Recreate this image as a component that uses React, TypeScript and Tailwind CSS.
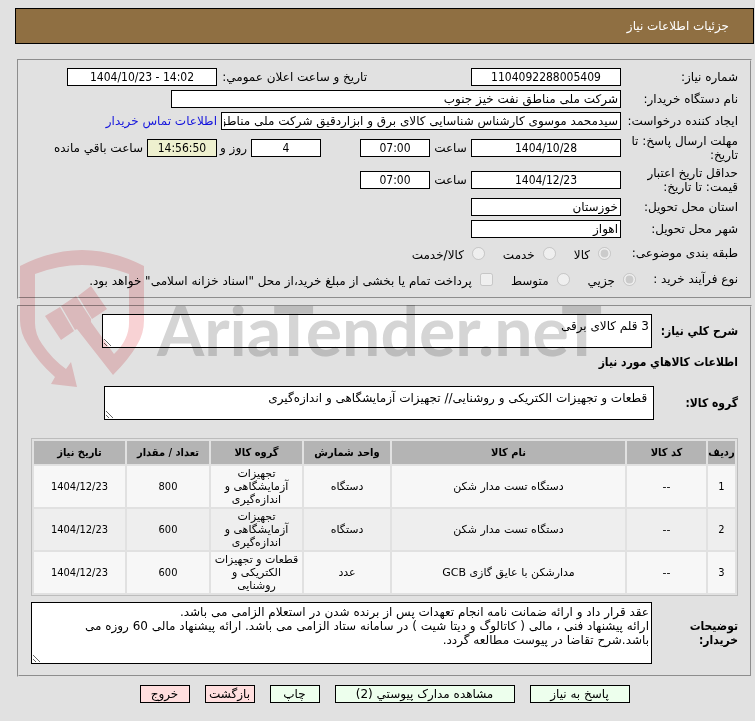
import React from "react";

const field =
  "h-[18px] border border-black px-0.5 text-[12px] leading-4 shrink-0 outline-none";
const numeric = "text-center font-['DejaVu_Sans_Condensed','DejaVu_Sans',sans-serif]";
const heading = "font-['DejaVu_Sans_Condensed','DejaVu_Sans',sans-serif] text-[12px] font-bold";
const area =
  "block border border-black bg-white px-0.5 text-[12px] leading-[14px] outline-none";

const items = [
  { name: "دستگاه تست مدار شکن", unit: "دستگاه", group: "تجهیزات آزمایشگاهی و اندازه‌گیری", count: "800", date: "1404/12/23" },
  { name: "دستگاه تست مدار شکن", unit: "دستگاه", group: "تجهیزات آزمایشگاهی و اندازه‌گیری", count: "600", date: "1404/12/23" },
  { name: "مدارشکن با عایق گازی GCB", unit: "عدد", group: "قطعات و تجهیزات الکتریکی و روشنایی", count: "600", date: "1404/12/23" },
];

const columns = [
  { title: "ردیف", width: "w-[27px]" },
  { title: "کد کالا", width: "w-[79px]" },
  { title: "نام کالا", width: "" },
  { title: "واحد شمارش", width: "w-[86px]" },
  { title: "گروه کالا", width: "w-[91px]" },
  { title: "تعداد / مقدار", width: "w-[82px]" },
  { title: "تاریخ نیاز", width: "w-[91px]" },
];

const actions = [
  { text: "پاسخ به نیاز", style: "w-[100px] bg-[#edffed]" },
  { text: "مشاهده مدارک پیوستي (2)", style: "w-[180px] bg-[#edffed]" },
  { text: "چاپ", style: "w-[50px] bg-[#edffed]" },
  { text: "بازگشت", style: "w-[50px] bg-[#ffdede]" },
  { text: "خروج", style: "w-[50px] bg-[#ffdede]" },
];

function FieldLabel({ id, children }: { id: string; children: React.ReactNode }) {
  return (
    <label htmlFor={id} className="w-[117px] shrink-0 leading-[14px]">
      {children}
    </label>
  );
}

function Choice({ type, name, label, checked }: { type: "radio" | "checkbox"; name: string; label: string; checked?: boolean }) {
  return (
    <label className="flex items-center gap-2 whitespace-nowrap">
      <input type={type} name={name} defaultChecked={checked} disabled className="m-0 h-[13px] w-[13px]" />
      <span className="pt-1">{label}</span>
    </label>
  );
}

function Watermark() {
  return (
    <div dir="ltr" className="pointer-events-none absolute left-5 top-[248px] flex items-end gap-3 mix-blend-multiply" aria-hidden="true">
      <svg width="125" height="140" viewBox="0 0 125 140" fill="#f8d2d4">
        <path d="M0 18 Q62 -14 124 18 V72 Q124 86 117 97 Q109 111 93 127 L57 81 L55 82 L41 58 L56 48 L71 71 L71 74 L94 106 Q109 92 109 75 V26 Q62 8 15 26 V75 Q15 86 22 96 Q32 111 46 121 L51 114 L57 139 L31 136 L35 129 Q18 114 8 97 Q0 85 0 72 Z" />
        <path d="M58 48 L71 38 L87 61 L72 71 Z" />
        <path d="M25 68 L40 59 L54 83 L41 92 Z" />
      </svg>
      <span className="whitespace-nowrap pb-5 font-['Lato','Liberation_Sans',sans-serif] text-[68px] font-bold leading-[76px] text-[#d5d5d5]">
        AriaTender.neT
      </span>
    </div>
  );
}

export default function App() {
  return (
    <div
      dir="rtl"
      className="relative min-h-screen bg-[#e1e1e1] pb-4 pl-[15px] pr-px pt-2 font-['DejaVu_Sans',sans-serif] text-[12px] leading-[14px] text-black"
    >
      <header className="flex h-9 items-center border border-black bg-[#8f6f42] px-6 text-white">
        <h1>جزئیات اطلاعات نیاز</h1>
      </header>

      <main className="mx-0.5 mt-[15px]">
        {/* Request details */}
        <fieldset className="flex flex-col gap-1 border-2 border-[#e1e1e1] px-3 pb-[7px] pt-[7px] [border-style:groove]">
          <div className="flex items-center">
            <FieldLabel id="number">شماره نیاز:</FieldLabel>
            <input id="number" readOnly defaultValue="1104092288005409" className={`${field} ${numeric} w-[150px] bg-white`} />
            <label htmlFor="announced" className="mr-[104px] w-[150px] shrink-0 whitespace-nowrap">
              تاریخ و ساعت اعلان عمومي:
            </label>
            <input id="announced" readOnly dir="ltr" defaultValue="1404/10/23 - 14:02" className={`${field} ${numeric} w-[150px] bg-white`} />
          </div>
          <div className="flex items-center">
            <FieldLabel id="buyer">نام دستگاه خریدار:</FieldLabel>
            <input id="buyer" readOnly defaultValue="شرکت ملی مناطق نفت خیز جنوب" className={`${field} w-[450px] bg-white`} />
          </div>
          <div className="flex items-center">
            <FieldLabel id="creator">
              <span className="whitespace-nowrap">ایجاد کننده درخواست:</span>
            </FieldLabel>
            <input
              id="creator"
              readOnly
              defaultValue="سیدمحمد موسوی کارشناس شناسایی کالای برق و ابزاردقیق شرکت ملی مناطق نفت خیز جنوب"
              className={`${field} w-[400px] bg-white`}
            />
            <a href="#contact" className="mr-1 whitespace-nowrap text-[#1414dd]">
              اطلاعات تماس خریدار
            </a>
          </div>
          <div className="flex items-center">
            <FieldLabel id="deadline">مهلت ارسال پاسخ: تا تاریخ:</FieldLabel>
            <input id="deadline" readOnly dir="ltr" defaultValue="1404/10/28" className={`${field} ${numeric} w-[150px] bg-white`} />
            <label htmlFor="deadline-time" className="w-[41px] shrink-0 text-center">ساعت</label>
            <input id="deadline-time" readOnly defaultValue="07:00" className={`${field} ${numeric} w-[70px] bg-white`} />
            <input id="days" readOnly defaultValue="4" className={`${field} ${numeric} mr-[39px] w-[70px] bg-white`} />
            <label htmlFor="days" className="w-[34px] shrink-0 whitespace-nowrap pr-1">روز و</label>
            <input id="remaining" readOnly defaultValue="14:56:50" className={`${field} ${numeric} w-[70px] bg-[#eef0cf]`} />
            <label htmlFor="remaining" className="mr-1 whitespace-nowrap">ساعت باقي مانده</label>
          </div>
          <div className="flex items-center">
            <FieldLabel id="validity">حداقل تاریخ اعتبار قیمت: تا تاریخ:</FieldLabel>
            <input id="validity" readOnly dir="ltr" defaultValue="1404/12/23" className={`${field} ${numeric} w-[150px] bg-white`} />
            <label htmlFor="validity-time" className="w-[41px] shrink-0 text-center">ساعت</label>
            <input id="validity-time" readOnly defaultValue="07:00" className={`${field} ${numeric} w-[70px] bg-white`} />
          </div>
          <div className="flex items-center">
            <FieldLabel id="province">استان محل تحویل:</FieldLabel>
            <input id="province" readOnly defaultValue="خوزستان" className={`${field} w-[150px] bg-white`} />
          </div>
          <div className="flex items-center">
            <FieldLabel id="city">شهر محل تحویل:</FieldLabel>
            <input id="city" readOnly defaultValue="اهواز" className={`${field} w-[150px] bg-white`} />
          </div>
          <div className="flex h-[22px] items-center gap-[18px]" role="radiogroup" aria-labelledby="category">
            <span id="category" className="w-[109px] whitespace-nowrap">طبقه بندی موضوعی:</span>
            <Choice type="radio" name="category" label="کالا" checked />
            <Choice type="radio" name="category" label="خدمت" />
            <Choice type="radio" name="category" label="کالا/خدمت" />
          </div>
          <div className="flex h-[22px] items-center gap-[18px]" role="radiogroup" aria-labelledby="process">
            <span id="process" className="w-[84px] whitespace-nowrap">نوع فرآیند خرید :</span>
            <Choice type="radio" name="process" label="جزیي" checked />
            <Choice type="radio" name="process" label="متوسط" />
            <Choice type="checkbox" name="treasury" label={'پرداخت تمام یا بخشی از مبلغ خرید،از محل "اسناد خزانه اسلامی" خواهد بود.'} />
          </div>
        </fieldset>

        {/* Requested goods */}
        <fieldset className="mt-1.5 border-2 border-[#e1e1e1] px-3 pb-[11px] pt-[7px] [border-style:groove]">
          <div className="flex items-center">
            <label htmlFor="summary" className={`${heading} w-[86px] shrink-0 whitespace-nowrap`}>شرح کلي نياز:</label>
            <textarea id="summary" readOnly defaultValue="3 قلم کالای برقی" className={`${area} h-[34px] w-[550px] pt-1`} />
          </div>
          <h2 className={`${heading} mt-[7px] leading-[14px]`}>اطلاعات کالاهاي مورد نیاز</h2>
          <div className="mt-[17px] flex items-center">
            <label htmlFor="group" className={`${heading} w-[84px] shrink-0`}>گروه کالا:</label>
            <textarea
              id="group"
              readOnly
              defaultValue=" قطعات و تجهیزات الکتریکی و روشنایی// تجهیزات آزمایشگاهی و اندازه‌گیری"
              className={`${area} h-[34px] w-[550px] pt-1`}
            />
          </div>

          <table className="mt-[18px] w-full table-fixed border-separate border-spacing-0.5 border border-[#bcbcbc] text-center text-[11px] leading-[13px]">
            <thead>
              <tr className="h-[23px] bg-[#b4b4b4] font-['DejaVu_Sans_Condensed','DejaVu_Sans',sans-serif]">
                {columns.map((c) => (
                  <th key={c.title} className={`${c.width} whitespace-nowrap p-0 font-bold`}>{c.title}</th>
                ))}
              </tr>
            </thead>
            <tbody>
              {items.map((item, i) => (
                <tr key={i} className="h-[41px] odd:bg-[#f7f7f7] even:bg-[#eeeeee]">
                  <td className={`${numeric} p-px`}>{i + 1}</td>
                  <td className="p-px">--</td>
                  <td className="p-px">{item.name}</td>
                  <td className="p-px">{item.unit}</td>
                  <td className="p-px">{item.group}</td>
                  <td className={`${numeric} p-px`}>{item.count}</td>
                  <td className={`${numeric} p-px`}>{item.date}</td>
                </tr>
              ))}
            </tbody>
          </table>

          <div className="mt-1.5 flex items-center">
            <label htmlFor="notes" className={`${heading} w-[86px] shrink-0 pl-6 leading-[14px]`}>توضیحات خریدار:</label>
            <textarea
              id="notes"
              readOnly
              defaultValue={
                "عقد قرار داد و ارائه ضمانت نامه انجام تعهدات پس از برنده شدن در استعلام الزامی می باشد.\nارائه پیشنهاد فنی ، مالی ( کاتالوگ و دیتا شیت ) در سامانه ستاد الزامی می باشد. ارائه پیشنهاد مالی 60 روزه می باشد.شرح تقاضا در پیوست مطالعه گردد."
              }
              className={`${area} h-[62px] grow pt-0.5`}
            />
          </div>
        </fieldset>
      </main>

      <div className="mt-2 flex justify-center gap-[15px]">
        {actions.map((a) => (
          <button key={a.text} type="button" className={`${a.style} h-[18px] whitespace-nowrap border border-black text-[12px] leading-4`}>
            {a.text}
          </button>
        ))}
      </div>

      <Watermark />
    </div>
  );
}
